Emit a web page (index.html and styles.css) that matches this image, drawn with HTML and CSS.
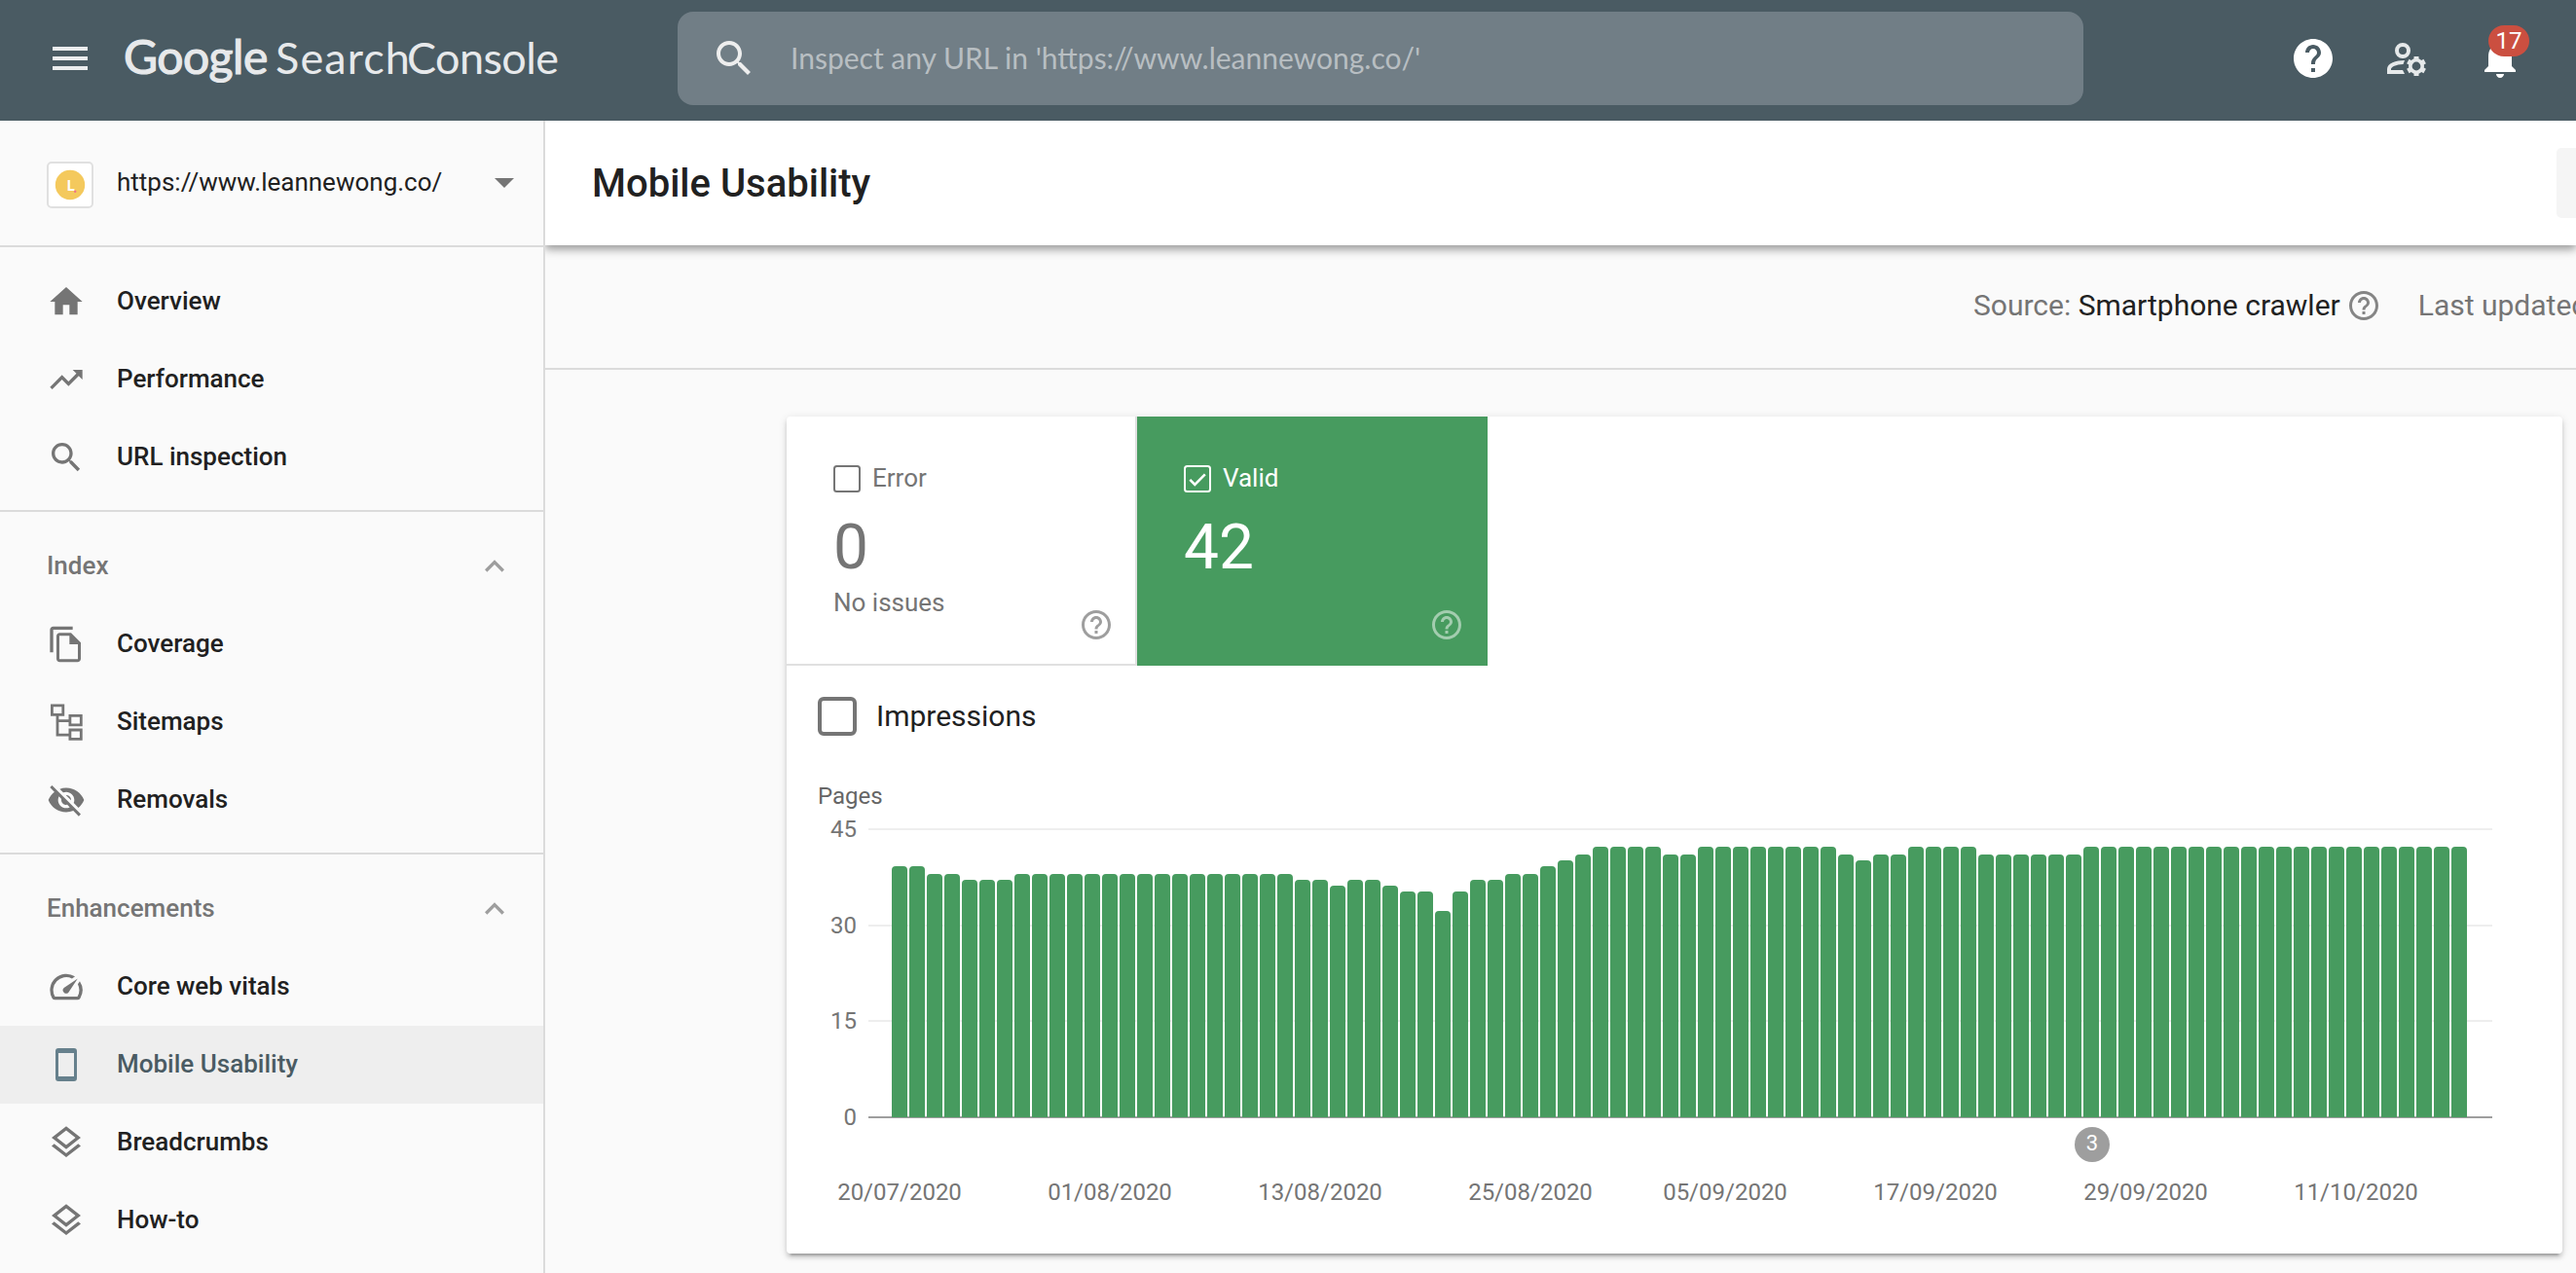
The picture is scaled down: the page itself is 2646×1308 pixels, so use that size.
FILE: index.html
```
<!DOCTYPE html>
<html lang="en">
<head>
<meta charset="utf-8">
<title>Google Search Console</title>
<link rel="stylesheet" href="styles.css">
</head>
<body>
<svg class="defs" aria-hidden="true">
  <symbol id="help-outline" viewBox="0 0 24 24"><path d="M11 18h2v-2h-2v2zm1-16C6.48 2 2 6.48 2 12s4.48 10 10 10 10-4.48 10-10S17.52 2 12 2zm0 18c-4.41 0-8-3.59-8-8s3.59-8 8-8 8 3.59 8 8-3.59 8-8 8zm0-14c-2.21 0-4 1.79-4 4h2c0-1.1.9-2 2-2s2 .9 2 2c0 2-3 1.75-3 5h2c0-2.25 3-2.5 3-5 0-2.21-1.79-4-4-4z"/></symbol>
  <symbol id="search" viewBox="0 0 24 24"><path d="M15.5 14h-.79l-.28-.27C15.41 12.59 16 11.11 16 9.5 16 5.91 13.09 3 9.5 3S3 5.91 3 9.5 5.91 16 9.5 16c1.61 0 3.09-.59 4.23-1.57l.27.28v.79l5 4.99L20.49 19l-4.99-5zm-6 0C7.01 14 5 11.99 5 9.5S7.01 5 9.5 5 14 7.01 14 9.5 11.99 14 9.5 14z"/></symbol>
  <symbol id="expand-less" viewBox="0 0 24 24"><path d="M12 8l-6 6 1.41 1.41L12 10.83l4.59 4.58L18 14z"/></symbol>
  <symbol id="layers" viewBox="0 0 24 24"><path d="M11.99 18.54l-7.37-5.73L3 14.07l9 7 9-7-1.63-1.27zM12 16l7.36-5.73L21 9l-9-7-9 7 1.63 1.27L12 16zm0-11.47L17.74 9 12 13.47 6.26 9 12 4.53z"/></symbol>
</svg>

<header class="topbar">
  <svg class="menu" viewBox="0 0 24 24"><path d="M3 18h18v-2H3v2zm0-5h18v-2H3v2zm0-7v2h18V6H3z"/></svg>
  <div class="logo"><span class="logo-google">Google</span><span class="logo-search">Search</span><span class="logo-console">Console</span></div>
  <div class="searchbox">
    <svg class="searchbox-icon"><use href="#search"/></svg>
    <span class="placeholder">Inspect any URL in 'https://www.leannewong.co/'</span>
  </div>
  <div class="actions">
    <svg class="action" viewBox="0 0 24 24"><path d="M12 2C6.48 2 2 6.48 2 12s4.48 10 10 10 10-4.48 10-10S17.52 2 12 2zm1 17h-2v-2h2v2zm2.07-7.75l-.9.92C13.45 12.9 13 13.5 13 15h-2v-.5c0-1.1.45-2.1 1.17-2.83l1.24-1.26c.37-.36.59-.86.59-1.41 0-1.1-.9-2-2-2s-2 .9-2 2H8c0-2.21 1.79-4 4-4s4 1.79 4 4c0 .88-.36 1.68-.93 2.25z"/></svg>
    <svg class="action dim" viewBox="0 0 48 48">
      <circle cx="20" cy="16" r="6" fill="none" stroke="currentColor" stroke-width="4"/>
      <path d="M22 26c-9 0-18 3-18 9v5h18l-2-4H8v-1c0-2 5-4.800 12.500-5z"/>
      <g fill="none" stroke="currentColor">
        <circle cx="34" cy="32" r="6.200" stroke-width="3.600"/>
        <path stroke-width="5" d="M34 22v4M34 38v4M25.340 27l3.460 2M39.200 35l3.460 2M42.660 27l-3.460 2M28.800 35l-3.460 2"/>
      </g>
    </svg>
    <div class="notify">
      <svg class="action" viewBox="0 0 24 24"><path d="M12 22c1.1 0 2-.9 2-2h-4c0 1.100.89 2 2 2zm6-6v-5c0-3.070-1.640-5.640-4.500-6.320V4c0-.83-.67-1.500-1.500-1.500s-1.500.67-1.500 1.500v.68C7.630 5.360 6 7.920 6 11v5l-2 2v1h16v-1l-2-2z"/></svg>
      <span class="badge">17</span>
    </div>
  </div>
</header>

<div class="layout">
  <nav class="sidebar">
    <div class="property">
      <svg class="favicon" viewBox="0 0 44 44"><circle cx="22" cy="22" r="15.200" fill="#f4c95d"/><text x="18.600" y="27.600" class="favicon-letter">L</text><circle cx="27.200" cy="28.700" r="1.200" fill="#f0718a"/></svg>
      <span class="property-name">https://www.leannewong.co/</span>
      <svg class="property-arrow" viewBox="0 0 24 24"><path d="M6 9l6 6 6-6z"/></svg>
    </div>
    <section class="nav-group">
      <a class="nav-item"><svg viewBox="0 0 24 24"><path d="M10 20v-6h4v6h5v-8h3L12 3 2 12h3v8z"/></svg><span>Overview</span></a>
      <a class="nav-item"><svg viewBox="0 0 24 24"><path d="M16 6l2.290 2.290-4.880 4.880-4-4L2 16.590 3.410 18l6-6 4 4 6.300-6.290L22 12V6z"/></svg><span>Performance</span></a>
      <a class="nav-item"><svg><use href="#search"/></svg><span>URL inspection</span></a>
    </section>
    <section class="nav-group">
      <div class="nav-heading"><span>Index</span><svg><use href="#expand-less"/></svg></div>
      <a class="nav-item"><svg viewBox="0 0 24 24"><path fill-rule="evenodd" d="M16 1H4c-1.100 0-2 .9-2 2v14h2V3h12V1zM15 5l6 6v10c0 1.100-.9 2-2 2H8c-1.100 0-2-.9-2-2V7c0-1.100.9-2 2-2h7zM7.800 6.800v14.400h11.400V12H14V6.800z"/></svg><span>Coverage</span></a>
      <a class="nav-item"><svg viewBox="0 0 40 40"><path fill="none" stroke="currentColor" stroke-width="2.800" d="M5.400 2.900h11.400v9.400H5.400zM23.900 13.400h11.400v9.400H23.900zM23.900 28h11.400v9.400H23.900zM11 12.300v20.900h12.900M11 18.600h12.900"/></svg><span>Sitemaps</span></a>
      <a class="nav-item"><svg viewBox="0 0 24 24"><path d="M12 7c2.760 0 5 2.240 5 5 0 .65-.13 1.260-.36 1.830l2.920 2.920c1.510-1.260 2.700-2.890 3.430-4.750-1.730-4.390-6-7.500-11-7.500-1.400 0-2.740.25-3.980.7l2.160 2.160C10.740 7.130 11.350 7 12 7zM2 4.270l2.280 2.280.46.46C3.080 8.300 1.780 10.020 1 12c1.730 4.390 6 7.500 11 7.500 1.550 0 3.030-.3 4.380-.84l.42.42L19.730 22 21 20.730 3.270 3 2 4.270zM7.530 9.800l1.550 1.550c-.05.21-.08.43-.08.65 0 1.660 1.340 3 3 3 .22 0 .44-.03.65-.08l1.550 1.550c-.67.33-1.410.53-2.200.53-2.760 0-5-2.240-5-5 0-.79.2-1.530.53-2.200zm4.310-.78l3.150 3.150.02-.16c0-1.660-1.340-3-3-3l-.17.01z"/></svg><span>Removals</span></a>
    </section>
    <section class="nav-group">
      <div class="nav-heading"><span>Enhancements</span><svg><use href="#expand-less"/></svg></div>
      <a class="nav-item"><svg viewBox="0 0 24 24"><path d="M20.380 8.570l-1.230 1.850a8 8 0 0 1-.22 7.580H5.070A8 8 0 0 1 15.580 6.850l1.850-1.230A10 10 0 0 0 3.350 19a2 2 0 0 0 1.720 1h13.850a2 2 0 0 0 1.740-1 10 10 0 0 0-.27-10.440zm-9.790 6.840a2 2 0 0 0 2.830 0l5.660-8.490-8.490 5.660a2 2 0 0 0 0 2.830z"/></svg><span>Core web vitals</span></a>
      <a class="nav-item active"><svg viewBox="0 0 40 40"><path fill-rule="evenodd" d="M12 3h16a3 3 0 0 1 3 3v28a3 3 0 0 1-3 3H12a3 3 0 0 1-3-3V6a3 3 0 0 1 3-3zM12 8v24h16V8z"/></svg><span>Mobile Usability</span></a>
      <a class="nav-item"><svg><use href="#layers"/></svg><span>Breadcrumbs</span></a>
      <a class="nav-item"><svg><use href="#layers"/></svg><span>How-to</span></a>
    </section>
  </nav>

  <main class="main">
    <div class="titlebar">
      <h1>Mobile Usability</h1>
      <div class="export"></div>
    </div>
    <div class="infobar">
      <span>Source: <span class="strong">Smartphone crawler</span></span>
      <svg class="info-help"><use href="#help-outline"/></svg>
      <span>Last updated</span>
    </div>
    <div class="card">
      <div class="tiles">
        <div class="tile tile-error">
          <div class="tile-head"><svg viewBox="0 0 28 28"><rect x="1" y="1" width="26" height="26" rx="2.500"/></svg><span>Error</span></div>
          <div class="tile-count">0</div>
          <div class="tile-foot"><span>No issues</span><svg><use href="#help-outline"/></svg></div>
        </div>
        <div class="tile tile-valid">
          <div class="tile-head"><svg viewBox="0 0 28 28"><rect x="1" y="1" width="26" height="26" rx="2.500"/><path d="M6.300 14.800l5 5L21.800 9.300" stroke-width="2.600"/></svg><span>Valid</span></div>
          <div class="tile-count">42</div>
          <div class="tile-foot"><span></span><svg><use href="#help-outline"/></svg></div>
        </div>
      </div>
      <div class="chart">
        <div class="impressions"><span class="checkbox"></span><span class="label">Impressions</span></div>
        <div class="axis-title">Pages</div>
        <div class="plot">
          <div class="ticks">
            <div class="tick"><span>45</span><i></i></div>
            <div class="tick"><span>30</span><i></i></div>
            <div class="tick"><span>15</span><i></i></div>
            <div class="tick zero"><span>0</span><i></i></div>
          </div>
          <div class="bars" id="bars"></div>
        </div>
        <div class="events"><span class="event">3</span></div>
        <div class="dates">
          <span>20/07/2020</span><span>01/08/2020</span><span>13/08/2020</span><span>25/08/2020</span><span class="short">05/09/2020</span><span>17/09/2020</span><span>29/09/2020</span><span>11/10/2020</span>
        </div>
      </div>
    </div>
  </main>
</div>
<script src="chart.js"></script>
</body>
</html>
```
FILE: styles.css
```
* { box-sizing: border-box; }

body {
  margin: 0;
  height: 1308px;
  overflow: hidden;
  display: flex;
  flex-direction: column;
  background: #fafafa;
  color: #212121;
  font-family: Roboto, "Liberation Sans", sans-serif;
}

svg { display: block; flex: none; fill: currentColor; }
.defs { width: 0; height: 0; position: absolute; }

/* top bar */
.topbar {
  flex: none;
  height: 124px;
  padding: 0 54px 4px 48px;
  display: flex;
  align-items: center;
  background: #4a5b63;
  color: #fff;
}
.menu { width: 48px; height: 48px; color: #ebedee; }
.logo {
  width: 569px;
  margin-left: 31px;
  padding-bottom: 3px;
  display: flex;
  align-items: baseline;
  flex: none;
  font-family: Lato, sans-serif;
  line-height: 60px;
  color: #e7e9eb;
  white-space: nowrap;
}
.logo-google {
  width: 156px;
  font-size: 48px;
  letter-spacing: -.5px;
  -webkit-text-stroke: 1.2px #e7e9eb;
}
.logo-search { width: 135px; font-size: 45px; letter-spacing: 1.1px; }
.logo-console { font-size: 45px; letter-spacing: -.6px; }
.searchbox {
  width: 1444px;
  height: 96px;
  padding-left: 34px;
  display: flex;
  align-items: center;
  gap: 34px;
  flex: none;
  border-radius: 16px;
  background: #717e86;
}
.searchbox-icon { width: 48px; height: 48px; color: #eee; }
.placeholder {
  padding-bottom: 3px;
  font-family: Lato, sans-serif;
  font-size: 30px;
  color: #b8bec2;
  white-space: nowrap;
}
.actions { display: flex; gap: 48px; margin-left: auto; }
.action { width: 48px; height: 48px; }
.dim { color: #e6e9ea; }
.notify { position: relative; }
.badge {
  position: absolute;
  left: 12px;
  top: -10px;
  width: 42px;
  height: 32px;
  border-radius: 16px;
  background: #cb4f40;
  font-size: 24px;
  line-height: 32px;
  text-align: center;
}

.layout { flex: 1; display: flex; min-height: 0; }

/* sidebar */
.sidebar {
  position: relative;
  z-index: 1;
  width: 560px;
  flex: none;
  border-right: 2px solid #dbdbdb;
  background: #fafafa;
}
.property {
  height: 130px;
  padding: 0 20px 0 48px;
  display: flex;
  align-items: center;
  border-bottom: 2px solid #dbdbdb;
}
.favicon {
  width: 48px;
  height: 48px;
  margin-top: 4px;
  border: 2px solid #e0e0e0;
  border-radius: 5px;
  background: #fff;
}
.favicon-letter { font: 700 16px Lato, sans-serif; fill: #fff; }
.property-name { margin-left: 24px; padding-bottom: 2px; font-size: 26px; }
.property-arrow { width: 40px; height: 40px; margin-left: auto; color: #757575; }
.nav-group { padding: 16px 0 14px; border-bottom: 2px solid #dbdbdb; }
.nav-group:last-child { border-bottom: 0; }
.nav-item, .nav-heading {
  height: 80px;
  padding: 0 30px 0 48px;
  display: flex;
  align-items: center;
  font-size: 26px;
  font-weight: 500;
}
.nav-item { gap: 32px; }
.nav-item svg, .nav-heading svg { width: 40px; height: 40px; }
.nav-item svg { color: #757575; }
.nav-item span, .nav-heading span { padding-bottom: 2px; }
.nav-heading { justify-content: space-between; color: #757575; }
.nav-heading svg { color: #9e9e9e; }
.active { background: #eee; color: #4a5b63; }
.nav-item.active svg { color: #66808c; }

/* main column */
.main { flex: 1; min-width: 0; overflow: hidden; }
.titlebar {
  position: relative;
  height: 128px;
  display: flex;
  align-items: center;
  justify-content: space-between;
  padding-left: 48px;
  background: #fff;
  box-shadow: 0 4px 8px rgba(0, 0, 0, .3), 0 4px 12px rgba(0, 0, 0, .12);
}
h1 { margin: 0; padding-top: 2px; font-size: 40px; font-weight: 500; line-height: 48px; }
.export { width: 20px; height: 72px; border-radius: 5px 0 0 5px; background: #f5f5f5; }
.infobar {
  height: 128px;
  padding: 0 0 4px 1467px;
  display: flex;
  align-items: center;
  border-bottom: 2px solid #dbdbdb;
  font-size: 30px;
  color: #757575;
  white-space: nowrap;
}
.strong { color: #212121; }
.info-help { width: 36px; height: 36px; margin: 2px 38px 0 6px; color: #858585; }

.card {
  width: 1824px;
  margin: 48px 0 0 248px;
  border-radius: 4px;
  background: #fff;
  box-shadow: 0 6px 2px -4px rgba(0, 0, 0, .2), 0 4px 4px rgba(0, 0, 0, .14), 0 2px 10px rgba(0, 0, 0, .12);
}
.tiles { display: flex; }
.tile { width: 360px; height: 256px; padding: 50px 24px 0 48px; }
.tile-error {
  padding-right: 22px;
  border-right: 2px solid #e0e0e0;
  border-bottom: 2px solid #e0e0e0;
  color: #757575;
}
.tile-valid { background: #479b5f; color: #fff; }
.tile-head { height: 28px; display: flex; align-items: center; gap: 12px; font-size: 26px; }
.tile-head span { padding-bottom: 2px; }
.tile-head svg { width: 28px; height: 28px; fill: none; stroke: currentColor; stroke-width: 2; }
.tile-count { margin-top: 25px; font-size: 64px; line-height: 64px; }
.tile-foot {
  height: 56px;
  margin-top: 9px;
  display: flex;
  justify-content: space-between;
  font-size: 26px;
  line-height: 30px;
}
.tile-foot svg { width: 36px; height: 36px; align-self: flex-end; color: #9e9e9e; }
.tile-valid .tile-foot svg { color: #a3cdaf; }

/* chart */
.chart { padding: 32px 72px 49px 32px; }
.impressions { height: 40px; display: flex; align-items: center; gap: 20px; font-size: 30px; }
.impressions .label { padding-bottom: 1px; }
.checkbox { width: 40px; height: 40px; border: 4px solid #757575; border-radius: 6px; }
.axis-title { margin-top: 48px; font-size: 24px; line-height: 28px; color: #666; }
.plot { height: 320px; margin-top: 8px; display: grid; }
.ticks, .bars { grid-area: 1 / 1; }
.ticks { display: flex; flex-direction: column; justify-content: space-between; }
.tick { height: 24px; display: flex; align-items: center; gap: 12px; font-size: 24px; line-height: 24px; color: #757575; }
.tick span { width: 40px; text-align: right; }
.tick i { flex: 1; height: 2px; background: #eee; }
.zero i { background: #9e9e9e; }
.bars { display: flex; align-items: flex-end; gap: 2px; padding: 0 0 12px 76px; }
.bar { width: 16px; flex: none; border-radius: 4px 4px 0 0; background: #479b5f; }
.events { height: 36px; margin: -2px 0 0 1291px; }
.event {
  display: block;
  width: 36px;
  height: 36px;
  border-radius: 50%;
  background: #9e9e9e;
  color: #fff;
  font-size: 22px;
  line-height: 33px;
  text-align: center;
}
.dates { display: flex; margin: 17px -72px 0 -24px; font-size: 24px; line-height: 28px; color: #757575; }
.dates span { width: 216px; flex: none; text-align: center; }
.dates .short { width: 184px; margin-right: 16px; }
```
FILE: chart.js
```
// Daily valid pages as [pages, number of consecutive days].
const runs = [
  [39, 2], [38, 2], [37, 3], [38, 16], [37, 2], [36, 1], [37, 2], [36, 1],
  [35, 2], [32, 1], [35, 1], [37, 2], [38, 2], [39, 1], [40, 1], [41, 1],
  [42, 4], [41, 2], [42, 8], [41, 1], [40, 1], [41, 2], [42, 4], [41, 6], [42, 22]
];
// Bar height in pixels for each page count.
const heights = { 32: 212, 35: 232, 36: 238, 37: 244, 38: 250, 39: 258, 40: 264, 41: 270, 42: 278 };

const bars = document.getElementById("bars");
for (const [pages, days] of runs) {
  for (let i = 0; i < days; i++) {
    const bar = document.createElement("span");
    bar.className = "bar";
    bar.style.height = heights[pages] + "px";
    bars.append(bar);
  }
}
```
